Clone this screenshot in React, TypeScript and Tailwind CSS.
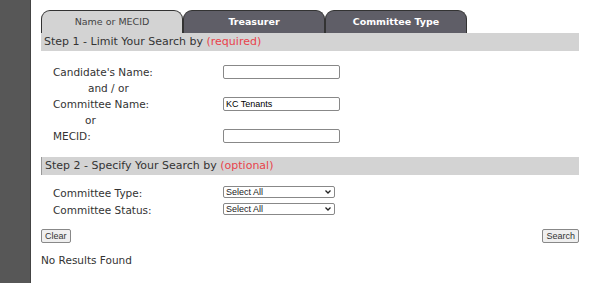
import React from "react";

const font = { fontFamily: '"DejaVu Sans", Verdana, sans-serif' };
const arial = { fontFamily: '"Liberation Sans", Arial, sans-serif' };

function Tab({ label, active }: { label: string; active?: boolean }) {
  return (
    <div
      className={
        "w-[142px] h-[23px] rounded-t-[9px] border border-b-0 border-[#333] flex justify-center pt-[4px] text-[9.5px] " +
        (active ? "bg-[#d3d3d3] text-[#444]" : "bg-[#5f5e67] text-white font-bold")
      }
    >
      {label}
    </div>
  );
}

function Select() {
  return (
    <div className="relative w-[112px] h-[12px] mb-[3px]">
      <select
        className="appearance-none block w-full h-[12px] py-0 border border-[#888] rounded-[2px] text-[9px] leading-[10px] pl-[2px] bg-white text-[#222]"
        style={arial}
      >
        <option>Select All</option>
      </select>
      <svg className="absolute right-[4px] top-[4px] pointer-events-none" width="6" height="4" viewBox="0 0 6 4">
        <path d="M0.5 0.5 L3 3 L5.5 0.5" stroke="#222" strokeWidth="1.3" fill="none" />
      </svg>
    </div>
  );
}

export default function App() {
  return (
    <div className="w-[599px] h-[283px] flex bg-white overflow-hidden" style={font}>
      <div className="w-[31px] bg-[#575757] border-r border-[#444]" />
      <div className="flex-1 pl-[10px] pr-[20px] pt-[10px] text-[10.5px] text-[#333]">
        <div className="flex">
          <Tab label="Name or MECID" active />
          <Tab label="Treasurer" />
          <Tab label="Committee Type" />
        </div>
        <div className="bg-[#d3d3d3] h-[18px] pl-[3px] flex items-center text-[11px]">
          Step 1 - Limit Your Search by&nbsp;<span className="text-[#e8434b]">(required)</span>
        </div>
        <div className="pl-[12px] pt-[13px] leading-[16px]">
          <div className="flex items-center">
            <div className="w-[170px]">Candidate's Name:</div>
            <input className="w-[117px] h-[14px] border border-[#888] rounded-[2px] text-[9px] px-[2px]" style={arial} />
          </div>
          <div className="pl-[35px]">and / or</div>
          <div className="flex items-center">
            <div className="w-[170px]">Committee Name:</div>
            <input defaultValue="KC Tenants" className="w-[117px] h-[14px] border border-[#888] rounded-[2px] text-[9px] px-[2px] text-black" style={arial} />
          </div>
          <div className="pl-[32px]">or</div>
          <div className="flex items-center">
            <div className="w-[170px]">MECID:</div>
            <input className="w-[117px] h-[14px] border border-[#888] rounded-[2px] text-[9px] px-[2px]" style={arial} />
          </div>
        </div>
        <div className="mt-[13px] bg-[#d3d3d3] h-[18px] pl-[3px] flex items-center text-[11px] border-l border-[#999]">
          Step 2 - Specify Your Search by&nbsp;<span className="text-[#e8434b]">(optional)</span>
        </div>
        <div className="pl-[12px] pt-[10px] leading-[17px]">
          <div className="flex items-center">
            <div className="w-[170px]">Committee Type:</div>
            <Select />
          </div>
          <div className="flex items-center">
            <div className="w-[170px]">Committee Status:</div>
            <Select />
          </div>
        </div>
        <div className="flex justify-between mt-[10px]">
          <button className="h-[14px] px-[3px] border border-[#888] rounded-[2px] bg-[#efefef] text-[9px] leading-none text-[#333]" style={arial}>Clear</button>
          <button className="h-[14px] px-[3px] border border-[#888] rounded-[2px] bg-[#efefef] text-[9px] leading-none text-[#333]" style={arial}>Search</button>
        </div>
        <div className="mt-[10px]">No Results Found</div>
      </div>
    </div>
  );
}
